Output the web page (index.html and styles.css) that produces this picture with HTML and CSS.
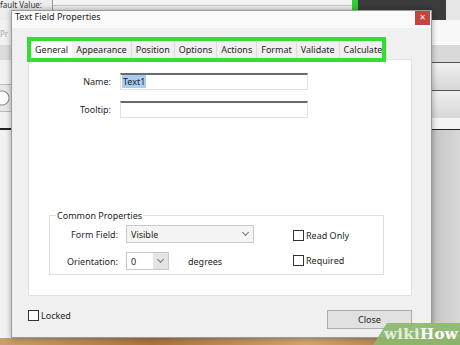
FILE: index.html
```html
<!DOCTYPE html>
<html lang="en">
<head>
    <title>Text Field Properties</title>
    <link rel="stylesheet" href="styles.css">
</head>
<body>
    <div class="app">
        <div class="app-top">
            <span class="app-label">fault Value:</span>
            <div class="app-field"></div>
            <div class="app-green"></div>
            <div class="app-dark"></div>
            <div class="app-edge"></div>
        </div>
        <div class="app-main">
            <div class="app-left">
                <div class="tool">Pr</div>
                <div class="tool bar"></div>
                <div class="tool icon"></div>
                <div class="tool icon round"></div>
                <div class="tool line"></div>
            </div>
            <div class="app-center"></div>
            <div class="app-right">
                <div class="strip light"></div>
                <div class="strip gray"></div>
                <div class="strip btn"></div>
                <div class="strip btn"></div>
                <div class="strip ruler"></div>
                <div class="strip fill"></div>
            </div>
        </div>
        <div class="app-floor"></div>
    </div>

    <div class="dialog">
        <div class="titlebar">
            <span>Text Field Properties</span>
            <span class="x">&#215;</span>
        </div>

        <div class="tabs">
            <span class="tab active">General</span>
            <span class="tab">Appearance</span>
            <span class="tab">Position</span>
            <span class="tab">Options</span>
            <span class="tab">Actions</span>
            <span class="tab">Format</span>
            <span class="tab">Validate</span>
            <span class="tab">Calculate</span>
        </div>

        <div class="panel">
            <div class="row">
                <label class="lbl">Name:</label>
                <div class="input"><span class="sel">Text1</span></div>
            </div>
            <div class="row">
                <label class="lbl">Tooltip:</label>
                <div class="input"></div>
            </div>

            <fieldset class="group">
                <legend>Common Properties</legend>
                <div class="group-grid">
                    <div class="fields">
                        <div class="frow">
                            <label class="flbl">Form Field:</label>
                            <div class="select wide"><span>Visible</span><span class="arrow"></span></div>
                        </div>
                        <div class="frow">
                            <label class="flbl">Orientation:</label>
                            <div class="select small"><span>0</span><span class="arrow"></span></div>
                            <span class="unit">degrees</span>
                        </div>
                    </div>
                    <div class="checks">
                        <label class="check"><span class="box"></span>Read Only</label>
                        <label class="check"><span class="box"></span>Required</label>
                    </div>
                </div>
            </fieldset>
        </div>

        <div class="footer">
            <label class="check locked"><span class="box"></span>Locked</label>
            <span class="close">Close</span>
        </div>

        <div class="highlight"></div>
    </div>

    <div class="wikihow"><span class="wiki">wiki</span>How</div>
</body>
</html>
```

FILE: styles.css
```css
* {
    box-sizing: border-box;
    margin: 0;
    padding: 0;
}

body {
    width: 460px;
    height: 345px;
    overflow: hidden;
    font-family: "Noto Sans", sans-serif;
    font-size: 9px;
    color: #1e1e1e;
    position: relative;
    background: #e9e9e9;
}

/* background application */
.app {
    display: flex;
    flex-direction: column;
    height: 345px;
}

.app-top {
    display: flex;
    height: 20px;
    background: #eeeeee;
}

.app-label {
    width: 53px;
    font-size: 8px;
    line-height: 9px;
    color: #333;
    border-right: 1px solid #999;
    height: 10px;
    white-space: nowrap;
    overflow: hidden;
}

.app-field {
    flex: 1;
    background: #f4f4f4;
    border-bottom: 1px solid #c8c8c8;
    height: 6px;
}

.app-green {
    width: 6px;
    background: #2fcf2f;
}

.app-dark {
    width: 88px;
    background: #3c3c3c;
}

.app-edge {
    width: 14px;
    background: #e6e6e6;
}

.app-main {
    display: flex;
    flex: 1;
}

.app-left {
    width: 11px;
    display: flex;
    flex-direction: column;
    background: #f2f2f2;
}

.tool {
    color: #aaa;
    font-size: 8px;
}

.tool:first-child {
    height: 25px;
    padding-top: 8px;
}

.tool.bar {
    height: 15px;
    background: #dcdcdc;
}

.tool.icon {
    height: 25px;
    border-bottom: 1px solid #bbb;
}

.tool.round {
    height: 27px;
    background: radial-gradient(circle at 2px 13px, #fff 6px, #888 7px, #e8e8e8 8px);
}

.tool.line {
    height: 18px;
    border-bottom: 2px solid #222;
}

.app-center {
    flex: 1;
}

.app-right {
    width: 28px;
    display: flex;
    flex-direction: column;
}

.strip.light {
    height: 25px;
    background: #f8f8f8;
}

.strip.gray {
    height: 17px;
    background: #d9d9d9;
}

.strip.btn {
    height: 28px;
    border-top: 1px solid #555;
    background: linear-gradient(#f0f0f0, #d6d6d6);
}

.strip.ruler {
    height: 12px;
    border-bottom: 1px solid #222;
    background: #f4f4f4;
}

.strip.fill {
    flex: 1;
    background: linear-gradient(90deg, #c4c4c4, #d8d8d8);
}

.app-floor {
    height: 7px;
    background: linear-gradient(90deg, #c9a06a, #a8733f, #d1a570, #9b6a3a);
}

/* dialog */
.dialog {
    position: absolute;
    left: 11px;
    top: 10px;
    width: 421px;
    height: 328px;
    background: #f0f0f0;
    border: 1px solid #9a9a9a;
    box-shadow: 0 0 6px rgba(0, 0, 0, 0.35);
    display: flex;
    flex-direction: column;
}

.titlebar {
    height: 17px;
    background: #fafafa;
    display: flex;
    align-items: flex-start;
    justify-content: space-between;
    padding: 0 0 0 3px;
    line-height: 12px;
}

.x {
    width: 15px;
    height: 14px;
    margin-right: 1px;
    background: #c7433d;
    color: #fff;
    font-size: 10px;
    line-height: 13px;
    text-align: center;
}

.tabs {
    display: flex;
    margin: 12px 0 0 19px;
    height: 19px;
}

.tab {
    padding: 0 4px;
    line-height: 19px;
    border-right: 1px solid #dcdcdc;
    background: #f0f0f0;
    white-space: nowrap;
}

.tab.active {
    background: #fff;
    padding: 0 4px;
    border-right: none;
}

.panel {
    margin-left: 16px;
    width: 384px;
    height: 237px;
    background: #fff;
    border: 1px solid #e2e2e2;
    padding-top: 13px;
    display: flex;
    flex-direction: column;
    gap: 11px;
}

.row {
    display: flex;
    align-items: center;
    gap: 9px;
}

.lbl {
    width: 82px;
    text-align: right;
}

.input {
    width: 188px;
    height: 17px;
    border: 1px solid #e2e2e2;
    border-top: 2px solid #6a6a6a;
    padding: 1px 1px;
    line-height: 12px;
}

.sel {
    background: #a9cdef;
    padding: 0 1px;
}

.group {
    margin: 80px 0 0 20px;
    width: 335px;
    height: 66px;
    border: 1px solid #e0e0e0;
    padding: 3px 0 0 8px;
}

legend {
    padding: 0 1px;
    margin-left: -2px;
}

.group-grid {
    display: flex;
}

.fields {
    width: 235px;
    display: flex;
    flex-direction: column;
    gap: 9px;
}

.frow {
    display: flex;
    align-items: center;
    gap: 8px;
}

.flbl {
    width: 60px;
    text-align: right;
}

.select {
    height: 18px;
    border: 1px solid #c9c9c9;
    background: #f4f4f4;
    display: flex;
    align-items: center;
    justify-content: space-between;
    padding-left: 4px;
}

.select.wide {
    width: 128px;
}

.select.small {
    width: 43px;
    background: #fff;
}

.arrow {
    width: 15px;
    height: 16px;
    background: #e4e4e4;
    position: relative;
}

.arrow::after {
    content: "";
    position: absolute;
    left: 5px;
    top: 4px;
    width: 4px;
    height: 4px;
    border-right: 1px solid #777;
    border-bottom: 1px solid #777;
    transform: rotate(45deg);
}

.select.wide .arrow {
    background: #f4f4f4;
}

.unit {
    margin-left: 11px;
}

.checks {
    display: flex;
    flex-direction: column;
    gap: 12px;
    padding-top: 4px;
}

.check {
    display: flex;
    align-items: center;
    gap: 2px;
}

.box {
    width: 11px;
    height: 11px;
    border: 1px solid #333;
    background: #fff;
}

.footer {
    display: flex;
    justify-content: space-between;
    align-items: flex-start;
    margin: 14px 19px 0 16px;
}

.locked {
    margin-top: -1px;
}

.close {
    width: 85px;
    height: 19px;
    border: 1px solid #adadad;
    background: #e1e1e1;
    text-align: center;
    line-height: 17px;
}

.highlight {
    position: absolute;
    left: 15px;
    top: 26px;
    width: 359px;
    height: 25px;
    border: 4px solid #2fe02f;
}

/* watermark */
.wikihow {
    position: absolute;
    right: 0;
    bottom: 0;
    width: 87px;
    height: 22px;
    background: rgba(140, 184, 110, 0.92);
    clip-path: polygon(14px 0, 100% 0, 100% 100%, 0 100%);
    color: #fff;
    font-family: "DejaVu Serif", serif;
    font-weight: bold;
    font-size: 15px;
    line-height: 22px;
    padding-left: 11px;
    letter-spacing: 0.3px;
}

.wiki {
    color: #e4ecdc;
}
```
